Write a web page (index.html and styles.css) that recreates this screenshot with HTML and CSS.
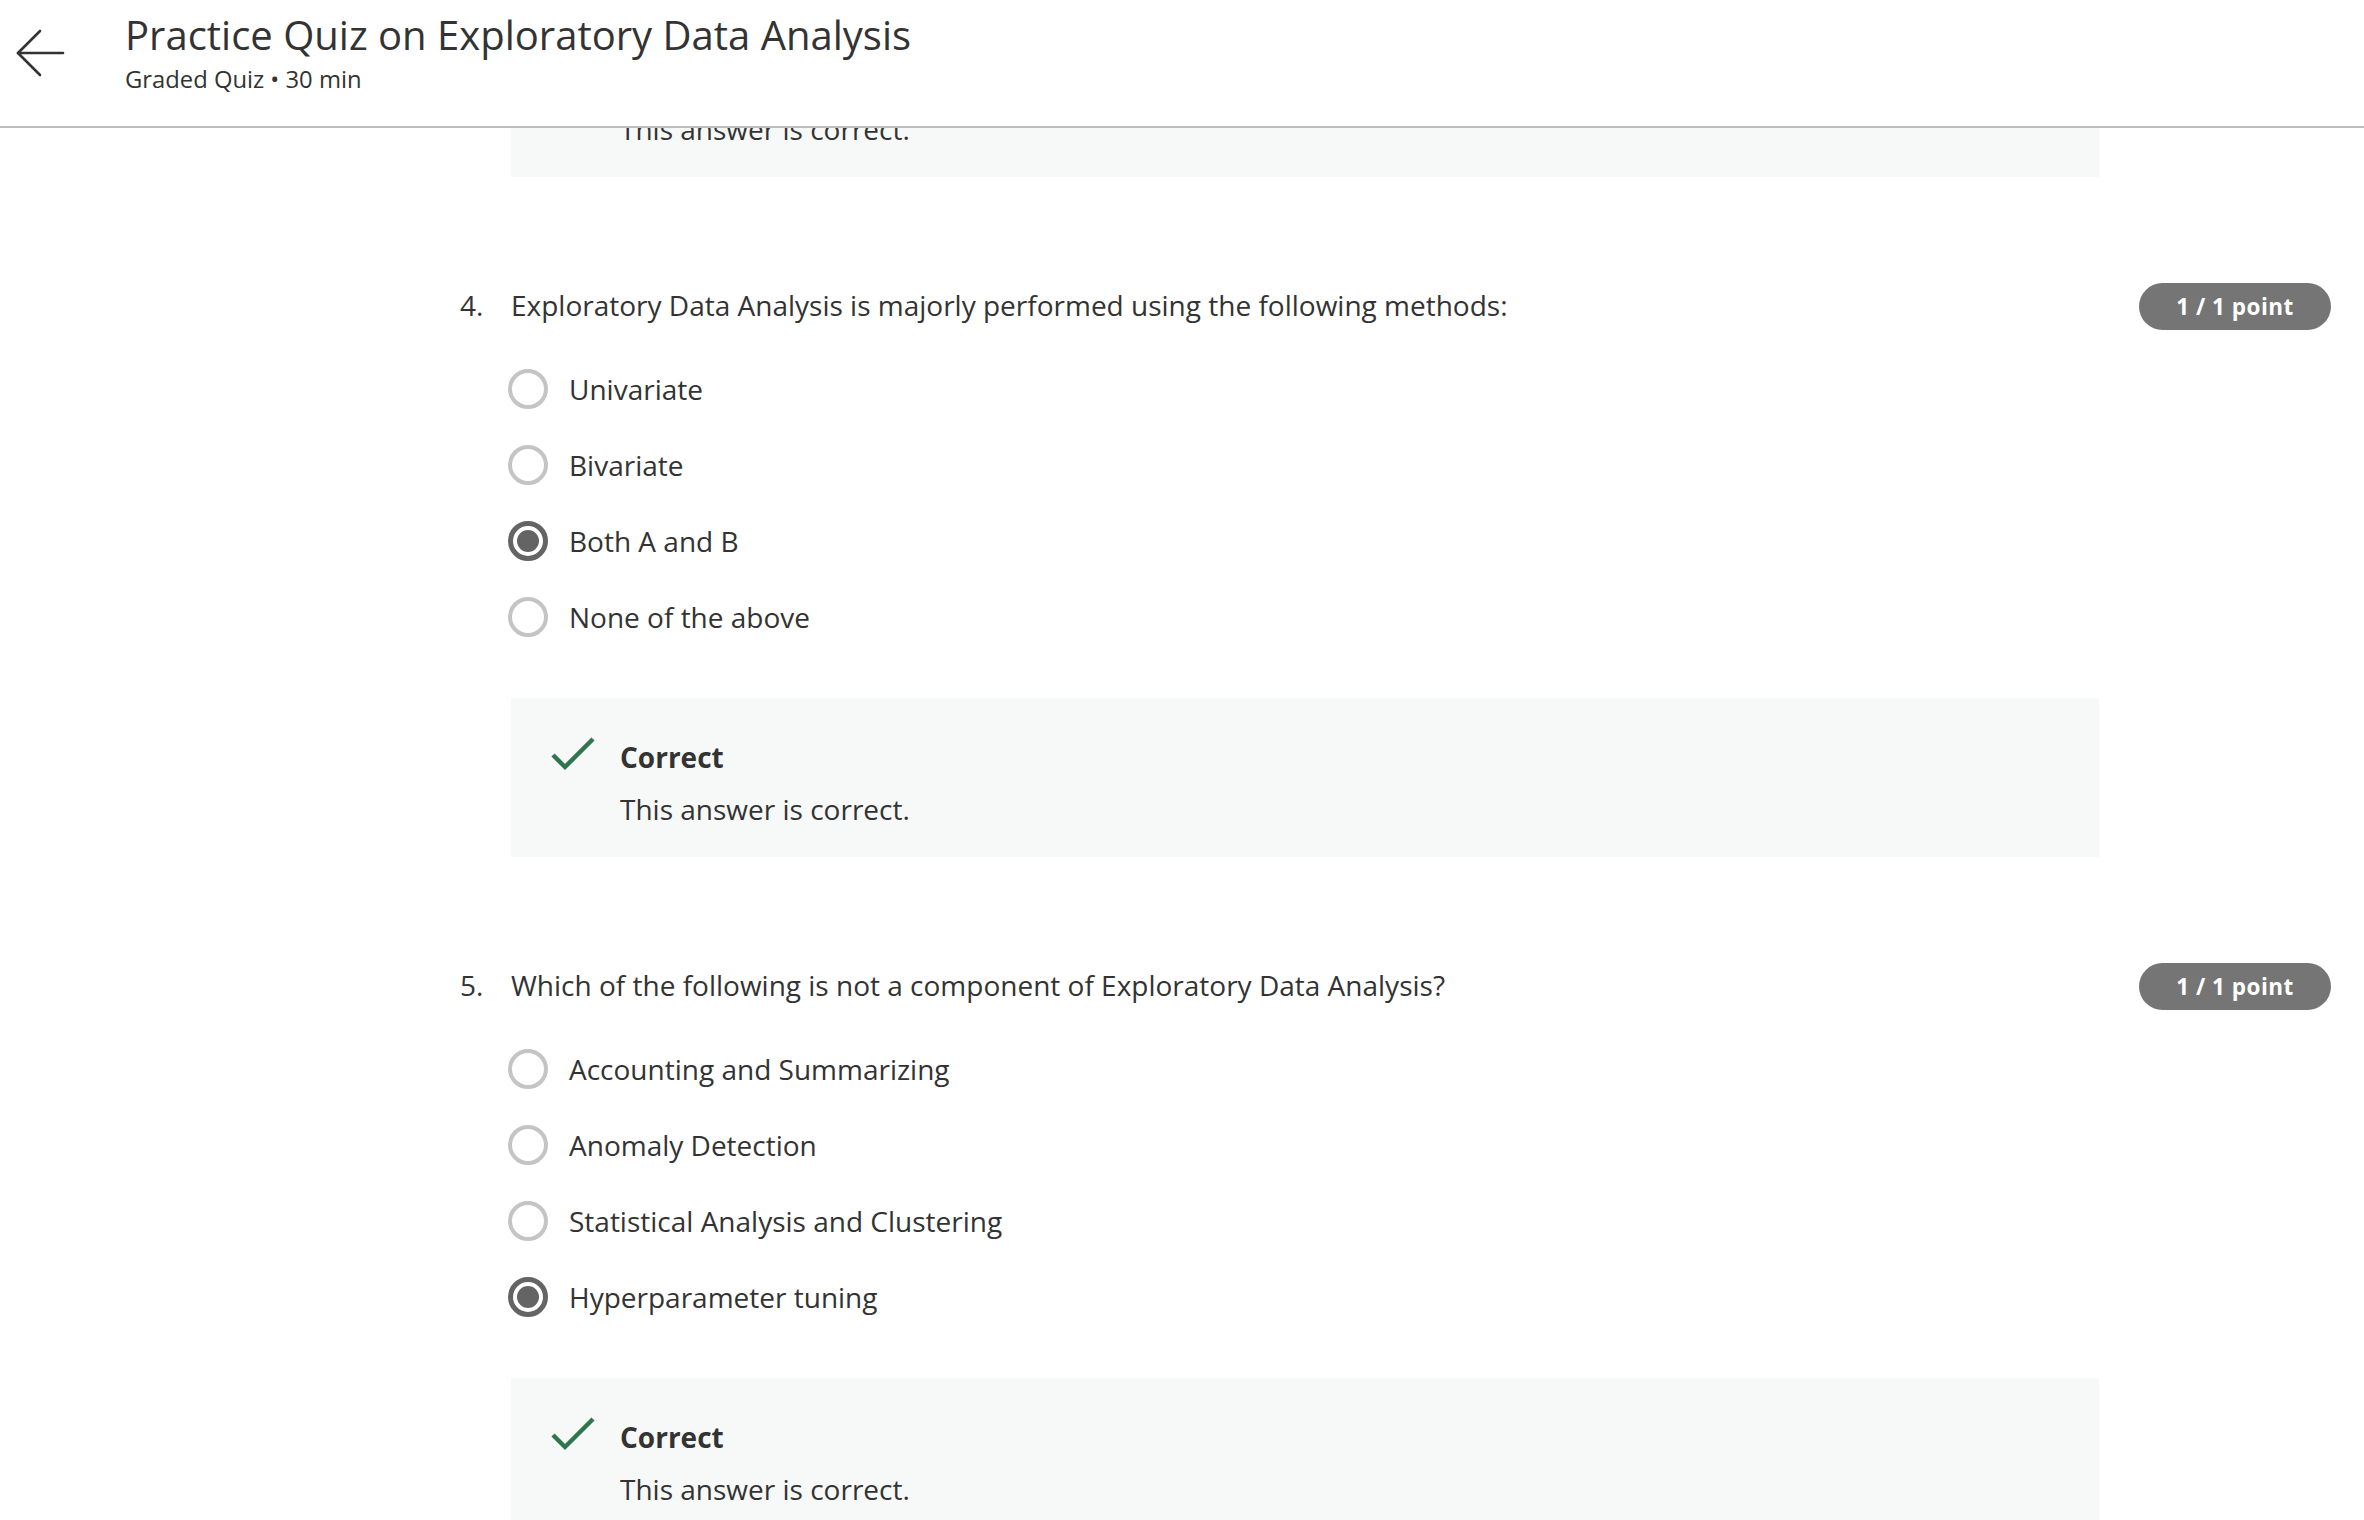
FILE: index.html
```html
<!DOCTYPE html>
<html lang="en">
<head>
<meta charset="utf-8">
<title>Practice Quiz on Exploratory Data Analysis</title>
<link rel="stylesheet" href="styles.css">
</head>
<body>
<header class="topbar">
  <a class="back" href="#" aria-label="Back">
    <svg width="50" height="50" viewBox="0 0 50 50" fill="none" stroke="#333" stroke-width="2.6" stroke-linecap="round" stroke-linejoin="round">
      <path d="M2 24 H47"/>
      <path d="M24 2 L2 24 L24 46"/>
    </svg>
  </a>
  <div class="titles">
    <h1 class="title">Practice Quiz on Exploratory Data Analysis</h1>
    <div class="subtitle">Graded Quiz • 30 min</div>
  </div>
</header>

<main class="content">
  <div class="q-body first">
    <div class="feedback">
      <svg class="check" width="44" height="44" viewBox="0 0 44 44" fill="none" stroke="#2e7550" stroke-width="4.4"><path d="M2 19 L14 31 L42 3"/></svg>
      <div class="fb-text">
        <div class="fb-title">Correct</div>
        <div class="fb-msg">This answer is correct.</div>
      </div>
    </div>
  </div>

  <section class="question">
    <div class="q-head">
      <span class="q-num">4.</span>
      <span class="q-text">Exploratory Data Analysis is majorly performed using the following methods:</span>
      <span class="badge">1 / 1 point</span>
    </div>
    <div class="q-body">
      <ul class="options">
        <li class="option"><span class="radio"></span><span class="opt-label">Univariate</span></li>
        <li class="option"><span class="radio"></span><span class="opt-label">Bivariate</span></li>
        <li class="option"><span class="radio checked"></span><span class="opt-label">Both A and B</span></li>
        <li class="option"><span class="radio"></span><span class="opt-label">None of the above</span></li>
      </ul>
      <div class="feedback">
        <svg class="check" width="44" height="44" viewBox="0 0 44 44" fill="none" stroke="#2e7550" stroke-width="4.4"><path d="M2 19 L14 31 L42 3"/></svg>
        <div class="fb-text">
          <div class="fb-title">Correct</div>
          <div class="fb-msg">This answer is correct.</div>
        </div>
      </div>
    </div>
  </section>

  <section class="question">
    <div class="q-head">
      <span class="q-num">5.</span>
      <span class="q-text">Which of the following is not a component of Exploratory Data Analysis?</span>
      <span class="badge">1 / 1 point</span>
    </div>
    <div class="q-body">
      <ul class="options">
        <li class="option"><span class="radio"></span><span class="opt-label">Accounting and Summarizing</span></li>
        <li class="option"><span class="radio"></span><span class="opt-label">Anomaly Detection</span></li>
        <li class="option"><span class="radio"></span><span class="opt-label">Statistical Analysis and Clustering</span></li>
        <li class="option"><span class="radio checked"></span><span class="opt-label">Hyperparameter tuning</span></li>
      </ul>
      <div class="feedback">
        <svg class="check" width="44" height="44" viewBox="0 0 44 44" fill="none" stroke="#2e7550" stroke-width="4.4"><path d="M2 19 L14 31 L42 3"/></svg>
        <div class="fb-text">
          <div class="fb-title">Correct</div>
          <div class="fb-msg">This answer is correct.</div>
        </div>
      </div>
    </div>
  </section>
</main>
</body>
</html>
```

FILE: styles.css
```css
* { box-sizing: border-box; }

html, body {
  margin: 0;
  padding: 0;
  background: #ffffff;
  color: #333333;
  font-family: "Open Sans", "Noto Sans", "Liberation Sans", sans-serif;
  overflow: hidden;
}

.topbar {
  position: fixed;
  top: 0;
  left: 0;
  right: 0;
  height: 128px;
  background: #ffffff;
  border-bottom: 2px solid #bdbdbd;
  display: flex;
  align-items: flex-start;
  padding-left: 16px;
  z-index: 10;
}

.back {
  display: block;
  margin-top: 29px;
  width: 50px;
  height: 50px;
}

.back svg { display: block; }

.titles {
  margin-left: 59px;
  padding-top: 12px;
}

.title {
  margin: 0;
  font-size: 40px;
  line-height: 46px;
  font-weight: 400;
  color: #333333;
  white-space: nowrap;
}

.subtitle {
  margin-top: 5px;
  font-size: 23.8px;
  line-height: 32px;
  color: #333333;
  white-space: nowrap;
}

.content {
  padding: 18px 33px 0 460px;
}

.q-body {
  margin-left: 51px;
  width: 1588px;
}

.question {
  margin-top: 106px;
}

.q-head {
  display: flex;
  align-items: center;
  height: 47px;
  font-size: 28px;
  line-height: 42px;
}

.q-num {
  width: 51px;
  flex: none;
  margin-bottom: 3px;
}

.q-text {
  flex: 1;
  margin-bottom: 3px;
}

.badge {
  flex: none;
  height: 47px;
  width: 192px;
  border-radius: 24px;
  background: #757575;
  color: #ffffff;
  font-weight: 700;
  font-size: 22.5px;
  letter-spacing: 0.5px;
  display: flex;
  align-items: center;
  justify-content: center;
}

.options {
  list-style: none;
  margin: 21px 0 0;
  padding: 0;
}

.option {
  display: flex;
  align-items: center;
  height: 76px;
  font-size: 28px;
  line-height: 42px;
}

.radio {
  flex: none;
  width: 40px;
  height: 40px;
  margin-left: -3px;
  border-radius: 50%;
  border: 4px solid #c4c4c4;
  background: #ffffff;
  display: flex;
  align-items: center;
  justify-content: center;
}

.radio.checked {
  border: 5px solid #646464;
}

.radio.checked::after {
  content: "";
  width: 22px;
  height: 22px;
  border-radius: 50%;
  background: #646464;
}

.opt-label {
  margin-left: 21px;
}

.feedback {
  margin-top: 43px;
  background: #f7f9f8;
  display: flex;
  align-items: flex-start;
  padding: 38px 0 27px 40px;
  font-size: 28px;
  line-height: 42px;
}

.first .feedback { margin-top: 0; }

.check {
  flex: none;
  display: block;
}

.fb-text {
  margin-left: 25px;
}

.fb-title {
  font-weight: 700;
}

.fb-msg {
  margin-top: 10px;
}
```
